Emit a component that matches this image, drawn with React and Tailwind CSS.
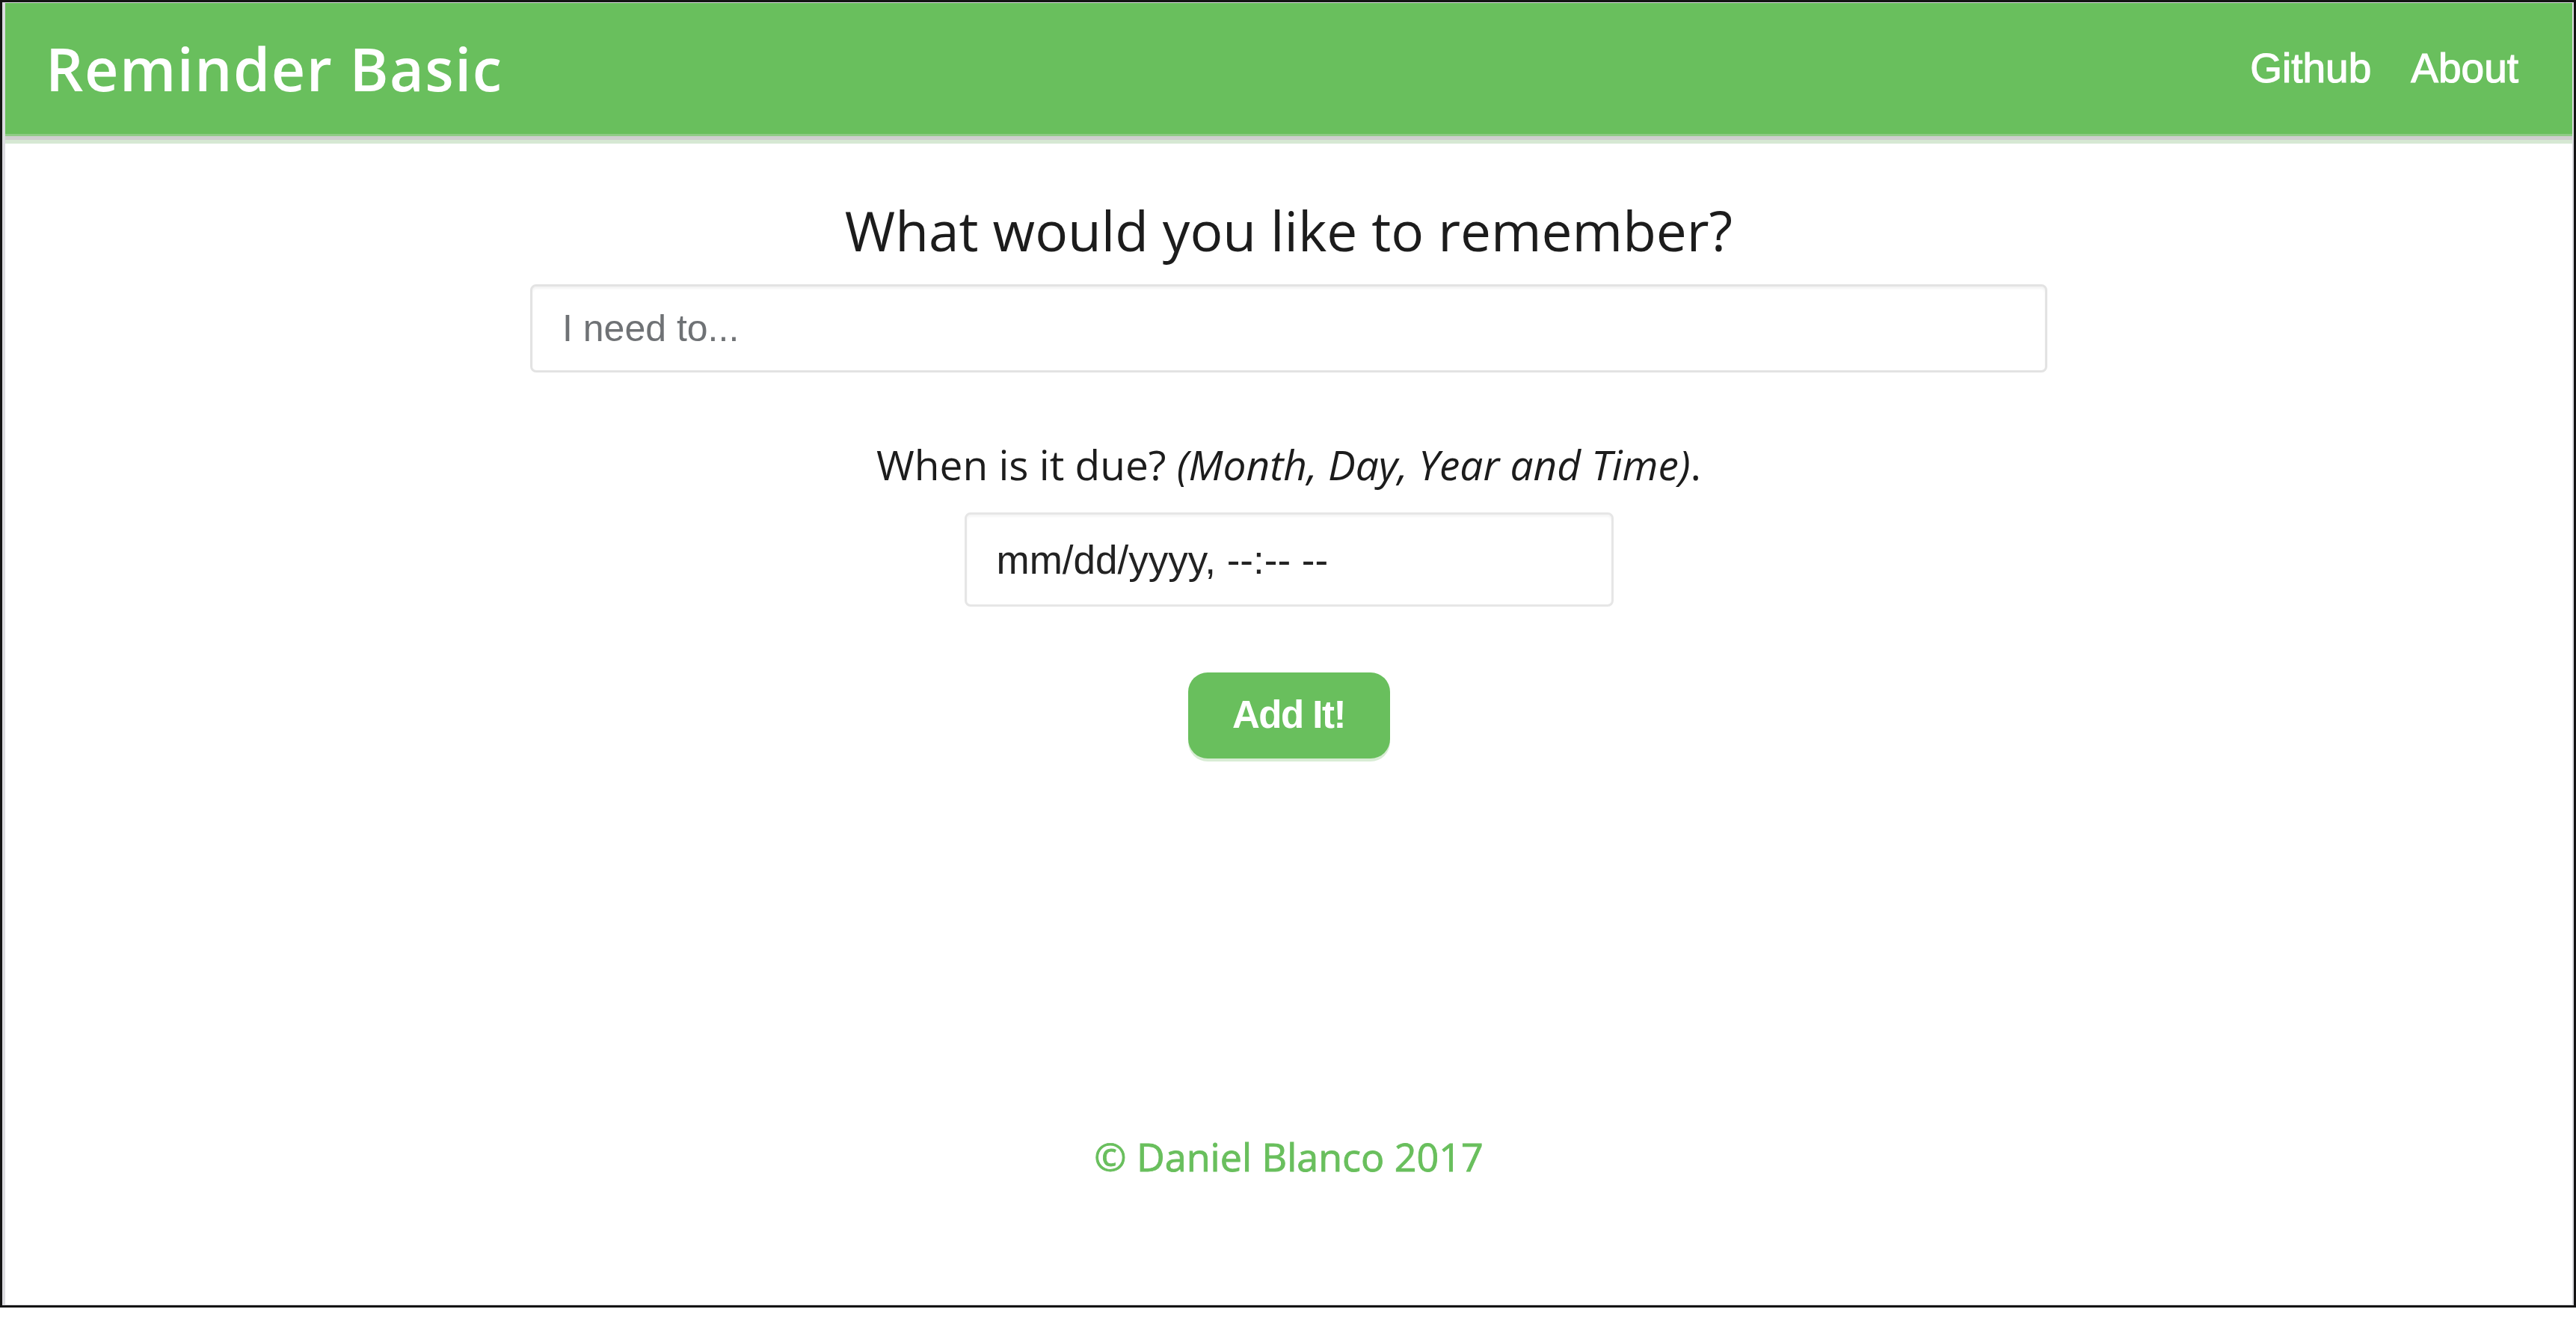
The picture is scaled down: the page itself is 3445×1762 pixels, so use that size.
import { useState } from 'react'

export default function App() {
  const [task, setTask] = useState('')
  const [due, setDue] = useState('')

  return (
    <div className="w-[3445px] h-[1762px] bg-white">
      <div className="h-[1748px] border-[3px] border-[#141414] flex flex-col">
        <div className="flex-1 flex flex-col border-l-[4px] border-t-[1px] border-r-[2px] border-b border-[#dcdce0] bg-white">
          {/* navbar */}
          <header className="h-[175px] bg-[#69bf5d] flex items-center justify-between pl-[54px] pr-[72px]">
            <a className="text-white text-[79px] font-semibold tracking-[1.5px] leading-none font-['Open_Sans',sans-serif]">
              Reminder Basic
            </a>
            <nav className="flex items-center gap-[53px] text-white text-[55px] leading-none font-['Liberation_Sans',Arial,sans-serif] [-webkit-text-stroke:1.2px_white]">
              <a>Github</a>
              <a>About</a>
            </nav>
          </header>
          <div className="h-[3px] bg-[#8fcb86]" />
          <div className="h-[5px] bg-[#cfcfcf]" />
          <div className="h-[5px] bg-[#d6e8d3]" />

          <main className="flex flex-col items-center font-['Open_Sans',sans-serif] text-[#1c1c1c]">
            <h1 className="mt-[79px] text-[73px] leading-none">What would you like to remember?</h1>

            <input
              value={task}
              onChange={(e) => setTask(e.target.value)}
              placeholder="I need to..."
              className="mt-[36px] w-[2029px] h-[118px] rounded-[8px] border-[3px] border-[#e3e3e3] shadow-[inset_0_3px_3px_rgba(0,0,0,0.05)] px-[40px] text-[50px] text-[#222] placeholder:text-[#6f7275] font-['Liberation_Sans',Arial,sans-serif] outline-none"
            />

            <p className="mt-[95px] text-[55px] leading-none">
              When is it due? <em>(Month, Day, Year and Time)</em>.
            </p>

            <input
              value={due}
              onChange={(e) => setDue(e.target.value)}
              placeholder="mm/dd/yyyy, --:-- --"
              className="mt-[37px] w-[868px] h-[126px] rounded-[8px] border-[3px] border-[#e6e6e6] shadow-[inset_0_3px_3px_rgba(0,0,0,0.04)] px-[40px] text-[53px] text-[#222] placeholder:text-[#222] font-['Liberation_Sans',Arial,sans-serif] outline-none"
            />

            <button className="mt-[88px] w-[270px] h-[115px] rounded-[26px] bg-[#69bf5d] text-white text-[51px] font-bold tracking-[-1.5px] font-['Liberation_Sans',Arial,sans-serif] shadow-[0_4px_0_#d8ecd4]">
              Add It!
            </button>

            <footer className="mt-[506px] text-[52px] leading-none text-[#69bf5d] [-webkit-text-stroke:0.9px_#69bf5d]">
              © Daniel Blanco 2017
            </footer>
          </main>
        </div>
      </div>
    </div>
  )
}
